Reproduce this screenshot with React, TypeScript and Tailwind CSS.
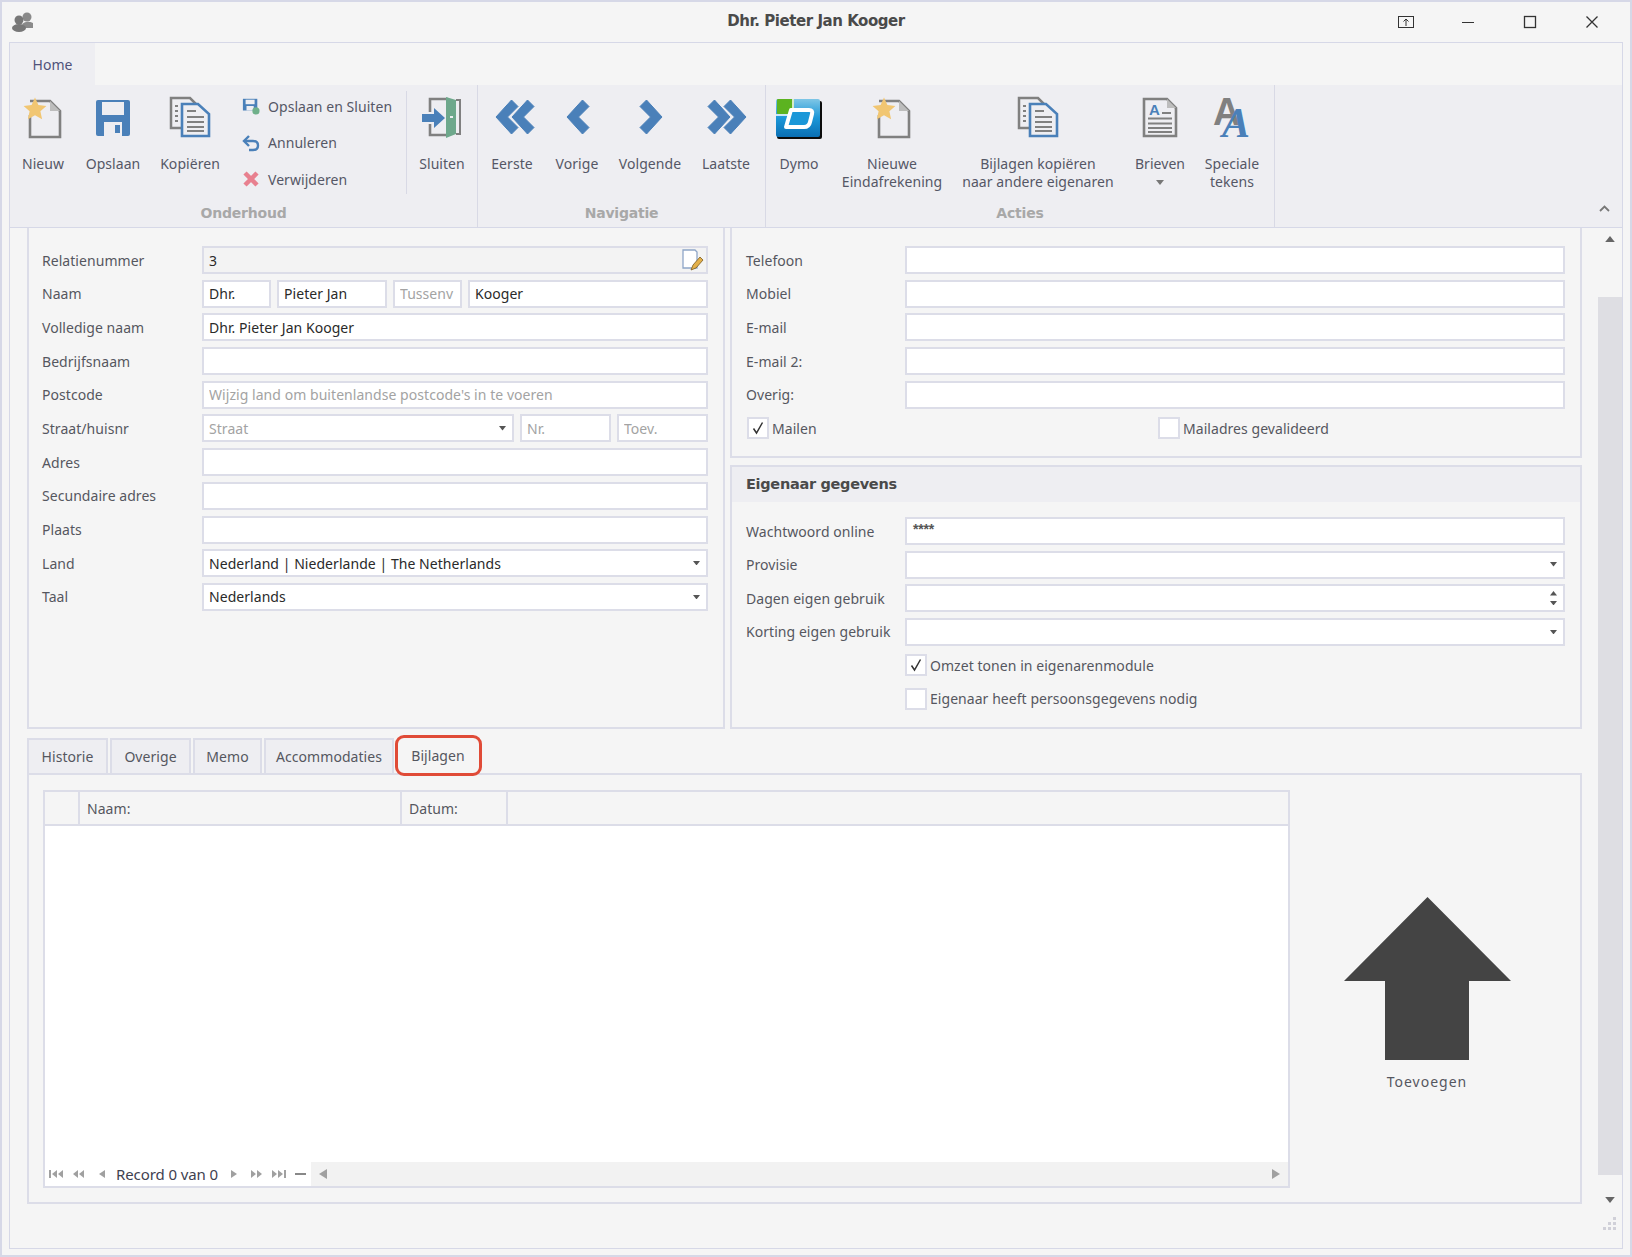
import React from "react";

const BLUE = "#4a80b9";
const GRAY = "#808080";

function NewDocIcon() {
  return (
    <svg width="44" height="44" viewBox="0 0 44 44">
      <path d="M9 6H29L39 16V42H9V20" fill="none" stroke={GRAY} strokeWidth="2.6" />
      <path d="M29 6V16H39Z" fill="#bdbdbd" />
      <path d="M14 1.5l3.4 7.5 8 .9-6 5.4 1.7 8-7.100-4.100-7.100 4.100 1.700-8-6-5.400 8-.9z" fill="#f1c672" transform="translate(0,1)" />
    </svg>
  );
}

function SaveIcon() {
  return (
    <svg width="44" height="44" viewBox="0 0 44 44">
      <path d="M5 7a2 2 0 0 1 2-2h30a2 2 0 0 1 2 2v32a2 2 0 0 1-2 2H7a2 2 0 0 1-2-2Z" fill={BLUE} />
      <rect x="11" y="7" width="22" height="13" fill="#eeeef2" />
      <rect x="13" y="27" width="18" height="14" fill="#eeeef2" />
      <rect x="24" y="30" width="5" height="8" fill={BLUE} />
    </svg>
  );
}

function CopyIcon() {
  return (
    <svg width="44" height="44" viewBox="0 0 44 44">
      <path d="M3 3H22L28 9V33H3Z" fill="none" stroke={GRAY} strokeWidth="2.500" />
      <path d="M7 11h3M7 16h3M7 21h3M7 26h3" stroke={GRAY} strokeWidth="2" />
      <path d="M14 9H30L41 19V41H14Z" fill="#eeeef2" stroke={BLUE} strokeWidth="2.600" />
      <path d="M19 16h9M19 22h17M19 27h17M19 32h17M19 36h17" stroke={GRAY} strokeWidth="2.200" />
    </svg>
  );
}

function ExitIcon() {
  return (
    <svg width="44" height="44" viewBox="0 0 44 44">
      <path d="M28 4H10V17M10 29V40H28" fill="none" stroke={GRAY} strokeWidth="2.600" />
      <path d="M26 2L36 5V39L26 43Z" fill="#6ea88c" />
      <path d="M36 5H40V39H36" fill="none" stroke={GRAY} strokeWidth="2" />
      <rect x="30" y="21" width="3" height="2" fill="#eeeef2" />
      <path d="M2 19H14V13L25 23L14 33V27H2Z" fill={BLUE} />
    </svg>
  );
}

function Chevrons({ dir, count }: { dir: "l" | "r"; count: 1 | 2 }) {
  const w = count === 2 ? 40 : 24;
  const left = "16.500,1 23,7.500 12.500,18 23,28.500 16.500,35 1,18";
  const right = "7.500,1 1,7.500 11.500,18 1,28.500 7.500,35 23,18";
  const pts = dir === "l" ? left : right;
  return (
    <svg width={w} height="44" viewBox={`0 0 ${w} 44`}>
      <g transform="translate(0,4)" fill={BLUE} stroke={BLUE} strokeWidth="1" strokeLinejoin="round">
        <polygon points={pts} />
        {count === 2 && <polygon points={pts} transform="translate(16,0)" />}
      </g>
    </svg>
  );
}

function DymoIcon() {
  return (
    <svg width="46" height="44" viewBox="0 0 46 44">
      <defs>
        <linearGradient id="dy" x1="0" y1="0" x2="0" y2="1">
          <stop offset="0" stopColor="#7fc6e6" />
          <stop offset="0.5" stopColor="#1b97d8" />
          <stop offset="1" stopColor="#0a6fb4" />
        </linearGradient>
      </defs>
      <rect x="1" y="6" width="45" height="38" rx="2" fill="#0c0c0c" />
      <rect x="0" y="4" width="44" height="38" rx="2" fill="url(#dy)" />
      <rect x="1" y="4" width="17" height="15" rx="1" fill="#5cb320" />
      <path d="M0 20H17V4" fill="none" stroke="#fff" strokeWidth="1.500" />
      <path d="M15 15H33Q37 15 36 19L34 27Q33 32 28 32H10Z" fill="#1b97d8" stroke="#fff" strokeWidth="4" strokeLinejoin="round" />
    </svg>
  );
}

function LetterIcon() {
  return (
    <svg width="44" height="44" viewBox="0 0 44 44">
      <path d="M6 4H29L38 13V41H6Z" fill="none" stroke={GRAY} strokeWidth="2.600" />
      <path d="M29 4V13H38Z" fill="#bdbdbd" />
      <text x="11" y="20" fontSize="15" fontWeight="700" fontFamily="'Liberation Sans',sans-serif" fill={BLUE}>A</text>
      <path d="M24 18h9M10 23.500h24M10 28.500h24M10 33h24M10 37h24" stroke={GRAY} strokeWidth="2" />
    </svg>
  );
}

function SpecialIcon() {
  return (
    <svg width="44" height="44" viewBox="0 0 44 44" overflow="visible">
      <text x="3" y="30" fontSize="38" fontWeight="700" fontFamily="'Liberation Sans',sans-serif" fill={GRAY}>A</text>
      <text x="12" y="42" fontSize="42" fontStyle="italic" fontWeight="700" fontFamily="'Liberation Serif',serif" fill={BLUE}>A</text>
    </svg>
  );
}

function Caret({ dir = "d", color = "#555", size = 7 }: { dir?: "d" | "u"; color?: string; size?: number }) {
  return (
    <svg width={size} height={size / 2 + 1} viewBox="0 0 8 5" className="shrink-0">
      <path d={dir === "d" ? "M0 0H8L4 5Z" : "M0 5H8L4 0Z"} fill={color} />
    </svg>
  );
}

function Large({ w, icon, lines, caret }: { w: string; icon: React.ReactNode; lines: string[]; caret?: boolean }) {
  return (
    <div className={`${w} flex flex-col items-center pt-[10px]`}>
      <div className="h-[44px] flex items-start justify-center">{icon}</div>
      <div className="mt-[16px] text-center leading-[18px] whitespace-nowrap">
        {lines.map((l) => (
          <div key={l}>{l}</div>
        ))}
        {caret && (
          <div className="flex justify-center pt-[7px]">
            <Caret color="#777" size={8} />
          </div>
        )}
      </div>
    </div>
  );
}

function Small({ icon, label }: { icon: React.ReactNode; label: string }) {
  return (
    <div className="h-[36.500px] flex items-center gap-[8px]">
      <div className="w-[18px] h-[18px] flex items-center justify-center">{icon}</div>
      <span className="whitespace-nowrap">{label}</span>
    </div>
  );
}

function Group({ w, label, children }: { w: string; label: string; children: React.ReactNode }) {
  return (
    <div className={`${w} shrink-0 h-full flex flex-col border-r border-[#d8d9e5]`}>
      <div className="h-[114px] flex">{children}</div>
      <div className="flex-1 flex items-center justify-center text-[#a8a8a8] text-[14px] font-bold [font-family:'DejaVu_Sans',sans-serif] tracking-[-0.2px]">
        {label}
      </div>
    </div>
  );
}

function Input({ w = "flex-1", value, ph, bg = "bg-white", right }: { w?: string; value?: string; ph?: string; bg?: string; right?: React.ReactNode }) {
  return (
    <div className={`${w} min-w-0 h-[28px] border-2 border-[#dcdde8] ${bg} flex items-center pl-[5px] pr-[6px] overflow-hidden`}>
      <span className={`flex-1 whitespace-nowrap overflow-hidden ${value ? "text-[#2a2a2a]" : "text-[#a3a3a3]"}`}>{value || ph}</span>
      {right}
    </div>
  );
}

function Row({ label, lw, children }: { label?: string; lw: string; children: React.ReactNode }) {
  return (
    <div className="h-[28px] flex items-center">
      <div className={`${lw} shrink-0 whitespace-nowrap text-[#55575f]`}>{label}</div>
      <div className="flex-1 flex gap-[6px] items-center">{children}</div>
    </div>
  );
}

function Check({ checked, label }: { checked?: boolean; label: string }) {
  return (
    <div className="flex items-center gap-[3px] h-[28px]">
      <div className="w-[22px] h-[22px] border-2 border-[#dcdde8] bg-white flex items-center justify-center">
        {checked && (
          <svg width="14" height="14" viewBox="0 0 14 14">
            <path d="M2.500 7.500L5.500 12L11.500 1.500" fill="none" stroke="#333" strokeWidth="1.500" />
          </svg>
        )}
      </div>
      <span className="whitespace-nowrap text-[#55575f]">{label}</span>
    </div>
  );
}

function PagerIcon({ d, w = 14 }: { d: string; w?: number }) {
  return (
    <svg width={w} height="10" viewBox={`0 0 ${w} 10`} className="shrink-0">
      <path d={d} fill="#a0a0a0" />
    </svg>
  );
}

const dd = <Caret />;

export default function App() {
  return (
    <div className="w-[1632px] h-[1257px] box-border border-2 border-[#d6d8e7] bg-[#f5f5f5] flex flex-col overflow-hidden text-[14px] text-[#555766] [font-family:'Noto_Sans',sans-serif] tracking-[0.05px]">
      {/* Title bar */}
      <div className="h-[40px] shrink-0 flex items-center">
        <div className="w-[300px] pl-[10px] flex items-center">
          <svg width="22" height="20" viewBox="0 0 22 20">
            <circle cx="15" cy="5" r="4.500" fill="#8a8a8a" />
            <path d="M10 12q5-4 11-1v5H13z" fill="#8a8a8a" />
            <circle cx="7" cy="8" r="4.500" fill="#777" />
            <ellipse cx="7" cy="16" rx="7" ry="4" fill="#777" />
          </svg>
        </div>
        <div className="flex-1 text-center text-[15px] font-bold text-[#4a4a4a] [font-family:'DejaVu_Sans',sans-serif] tracking-[-0.45px] pb-[1px]">
          Dhr. Pieter Jan Kooger
        </div>
        <div className="w-[300px] flex items-center justify-end h-full pr-[30px] gap-[46px] text-[#333]">
          <svg width="16" height="12" viewBox="0 0 16 12"><rect x="0.500" y="0.500" width="15" height="11" fill="none" stroke="#333" /><path d="M8 10V4M5.500 5.500L8 3l2.500 2.500" fill="none" stroke="#333" /></svg>
          <svg width="16" height="12" viewBox="0 0 16 12"><path d="M2 6.500H14" stroke="#333" strokeWidth="1" /></svg>
          <svg width="16" height="14" viewBox="0 0 16 14"><rect x="2.500" y="1.500" width="11" height="11" fill="none" stroke="#333" strokeWidth="1.300" /></svg>
          <svg width="16" height="14" viewBox="0 0 16 14"><path d="M2.500 1.500L13.500 12.500M13.500 1.500L2.500 12.500" stroke="#333" strokeWidth="1.300" /></svg>
        </div>
      </div>

      {/* Frame */}
      <div className="ml-[7px] w-[1614px] h-[1207px] shrink-0 border border-[#d6d8e7] flex flex-col">
        <div className="h-[42px] shrink-0 flex">
          <div className="w-[85px] bg-[#eeeef2] flex items-center justify-center text-[#50527a] pt-[1px]">Home</div>
        </div>

        {/* Ribbon */}
        <div className="h-[143px] shrink-0 bg-[#eeeef2] border-b border-[#d6d8e7] flex">
          <Group w="w-[468px]" label="Onderhoud">
            <Large w="w-[66px]" icon={<NewDocIcon />} lines={["Nieuw"]} />
            <Large w="w-[74px]" icon={<SaveIcon />} lines={["Opslaan"]} />
            <Large w="w-[80px]" icon={<CopyIcon />} lines={["Kopiëren"]} />
            <div className="w-[176px] pl-[12px] pt-[3px]">
              <Small
                label="Opslaan en Sluiten"
                icon={
                  <svg width="20" height="20" viewBox="0 0 20 20">
                    <path d="M1 2H17V15H1Z" fill={BLUE} />
                    <rect x="4" y="3" width="10" height="5" fill="#eeeef2" />
                    <rect x="5" y="10" width="8" height="5" fill="#eeeef2" />
                    <circle cx="15.500" cy="15.500" r="4" fill="#6fb08a" />
                  </svg>
                }
              />
              <Small
                label="Annuleren"
                icon={
                  <svg width="18" height="18" viewBox="0 0 18 18">
                    <path d="M7 2L2 7L7 12" fill="none" stroke={BLUE} strokeWidth="2.400" />
                    <path d="M3 7H11Q16 7 16 11.500T11 16H7" fill="none" stroke={BLUE} strokeWidth="2.400" />
                  </svg>
                }
              />
              <Small
                label="Verwijderen"
                icon={
                  <svg width="18" height="18" viewBox="0 0 18 18">
                    <path d="M3 3L15 15M15 3L3 15" stroke="#e8808f" strokeWidth="4.500" />
                  </svg>
                }
              />
            </div>
            <div className="w-px h-[103px] mt-[6px] bg-[#d8d9e5]" />
            <Large w="w-[70px]" icon={<ExitIcon />} lines={["Sluiten"]} />
          </Group>
          <Group w="w-[288px]" label="Navigatie">
            <Large w="w-[68px]" icon={<div className="translate-x-[3px]"><Chevrons dir="l" count={2} /></div>} lines={["Eerste"]} />
            <Large w="w-[62px]" icon={<div className="translate-x-[1px]"><Chevrons dir="l" count={1} /></div>} lines={["Vorige"]} />
            <Large w="w-[84px]" icon={<div className="translate-x-[1px]"><Chevrons dir="r" count={1} /></div>} lines={["Volgende"]} />
            <Large w="w-[68px]" icon={<div className="translate-x-[1px]"><Chevrons dir="r" count={2} /></div>} lines={["Laatste"]} />
          </Group>
          <Group w="w-[509px]" label="Acties">
            <Large w="w-[66px]" icon={<DymoIcon />} lines={["Dymo"]} />
            <Large w="w-[120px]" icon={<NewDocIcon />} lines={["Nieuwe", "Eindafrekening"]} />
            <Large w="w-[172px]" icon={<CopyIcon />} lines={["Bijlagen kopiëren", "naar andere eigenaren"]} />
            <Large w="w-[72px]" icon={<LetterIcon />} lines={["Brieven"]} caret />
            <Large w="w-[72px]" icon={<SpecialIcon />} lines={["Speciale", "tekens"]} />
          </Group>
          <div className="flex-1 flex items-end justify-end pr-[12px] pb-[15px]">
            <svg width="11" height="7" viewBox="0 0 11 7"><path d="M1 6L5.500 1.500L10 6" fill="none" stroke="#777" strokeWidth="1.800" /></svg>
          </div>
        </div>

        {/* Main */}
        <div className="flex-1 flex min-h-0">
          <div className="w-[1572px] shrink-0 pl-[17px] flex flex-col">
            <div className="h-[501px] shrink-0 flex gap-[5px]">
              {/* Left panel */}
              <div className="w-[698px] border-x-2 border-b-2 border-[#dcdde8] pl-[13px] pr-[15px] pt-[18px] flex flex-col gap-[5.700px]">
                <Row label="Relatienummer" lw="w-[160px]">
                  <Input value="3" bg="bg-[#f3f3f3]" right={
                    <svg width="24" height="24" viewBox="0 0 24 24" className="shrink-0 -mr-[4px]">
                      <path d="M3 2H15L17 4V20H3Z" fill="#fff" stroke="#8fa6c8" strokeWidth="1.300" />
                      <path d="M11 22L13 17L20 9L23 12L16 20Z" fill="#e3b04a" stroke="#7a5a20" strokeWidth="0.800" />
                    </svg>
                  } />
                </Row>
                <Row label="Naam" lw="w-[160px]">
                  <Input w="w-[69px]" value="Dhr." />
                  <Input w="w-[110px]" value="Pieter Jan" />
                  <Input w="w-[69px]" ph="Tussenv" />
                  <Input value="Kooger" />
                </Row>
                <Row label="Volledige naam" lw="w-[160px]"><Input value="Dhr. Pieter Jan Kooger" /></Row>
                <Row label="Bedrijfsnaam" lw="w-[160px]"><Input /></Row>
                <Row label="Postcode" lw="w-[160px]"><Input ph="Wijzig land om buitenlandse postcode's in te voeren" /></Row>
                <Row label="Straat/huisnr" lw="w-[160px]">
                  <Input w="w-[312px]" ph="Straat" right={dd} />
                  <Input w="w-[91px]" ph="Nr." />
                  <Input ph="Toev." />
                </Row>
                <Row label="Adres" lw="w-[160px]"><Input /></Row>
                <Row label="Secundaire adres" lw="w-[160px]"><Input /></Row>
                <Row label="Plaats" lw="w-[160px]"><Input /></Row>
                <Row label="Land" lw="w-[160px]"><Input value="Nederland | Niederlande | The Netherlands" right={dd} /></Row>
                <Row label="Taal" lw="w-[160px]"><Input value="Nederlands" right={dd} /></Row>
              </div>

              {/* Right column */}
              <div className="flex-1 flex flex-col gap-[7px]">
                <div className="h-[230px] shrink-0 border-x-2 border-b-2 border-[#dcdde8] pl-[14px] pr-[15px] pt-[18px] flex flex-col gap-[5.700px]">
                  <Row label="Telefoon" lw="w-[159px]"><Input /></Row>
                  <Row label="Mobiel" lw="w-[159px]"><Input /></Row>
                  <Row label="E-mail" lw="w-[159px]"><Input /></Row>
                  <Row label="E-mail 2:" lw="w-[159px]"><Input /></Row>
                  <Row label="Overig:" lw="w-[159px]"><Input /></Row>
                  <div className="flex pl-[1px]">
                    <div className="w-[411px]"><Check checked label="Mailen" /></div>
                    <Check label="Mailadres gevalideerd" />
                  </div>
                </div>
                <div className="flex-1 border-2 border-[#dcdde8] flex flex-col">
                  <div className="h-[35px] shrink-0 bg-[#eeeef2] pl-[14px] flex items-center text-[14.500px] font-bold text-[#4a4a4a] [font-family:'DejaVu_Sans',sans-serif] tracking-[-0.3px]">
                    Eigenaar gegevens
                  </div>
                  <div className="pl-[14px] pr-[15px] pt-[15px] flex flex-col gap-[5.600px]">
                    <Row label="Wachtwoord online" lw="w-[159px]">
                      <div className="flex-1 h-[28px] border-2 border-[#dcdde8] bg-white pl-[6px] text-[#555] text-[14px] font-bold leading-[20px] tracking-[-0.2px] [font-family:'Liberation_Sans',sans-serif]">****</div>
                    </Row>
                    <Row label="Provisie" lw="w-[159px]"><Input right={dd} /></Row>
                    <Row label="Dagen eigen gebruik" lw="w-[159px]">
                      <Input right={<div className="flex flex-col gap-[5px]"><Caret dir="u" /><Caret /></div>} />
                    </Row>
                    <Row label="Korting eigen gebruik" lw="w-[159px]"><Input right={dd} /></Row>
                    <Row lw="w-[159px]"><Check checked label="Omzet tonen in eigenarenmodule" /></Row>
                    <Row lw="w-[159px]"><Check label="Eigenaar heeft persoonsgegevens nodig" /></Row>
                  </div>
                </div>
              </div>
            </div>

            {/* Tabs */}
            <div className="mt-[9px] h-[35px] shrink-0 flex gap-[2px]">
              {[
                ["Historie", "w-[81px]"],
                ["Overige", "w-[81px]"],
                ["Memo", "w-[69px]"],
                ["Accommodaties", "w-[130px]"],
              ].map(([t, w]) => (
                <div key={t} className={`${w} bg-[#eeeef2] border-2 border-b-0 border-[#dcdde8] flex items-center justify-center text-[#55575f]`}>{t}</div>
              ))}
              <div className="w-[84px] relative flex items-center justify-center text-[#55575f]">
                Bijlagen
                <div className="absolute -left-[1px] -top-[3px] w-[87px] h-[41px] border-[3px] border-[#e04b37] rounded-[9px]" />
              </div>
            </div>

            {/* Tab panel */}
            <div className="h-[431px] shrink-0 border-2 border-[#dcdde8] flex pl-[14px] pt-[15px]">
              <div className="w-[1247px] h-[398px] shrink-0 border-2 border-[#dcdde8] bg-white flex flex-col">
                <div className="h-[34px] shrink-0 bg-[#f5f5f5] border-b-2 border-[#dcdde8] flex text-[#55575f]">
                  <div className="w-[35px] border-r-2 border-[#dcdde8]" />
                  <div className="w-[322px] border-r-2 border-[#dcdde8] pl-[7px] flex items-center">Naam:</div>
                  <div className="w-[106px] border-r-2 border-[#dcdde8] pl-[7px] flex items-center">Datum:</div>
                </div>
                <div className="flex-1" />
                <div className="h-[24px] shrink-0 flex items-center pl-[4px] text-[#3f4150] text-[15px] tracking-[-0.1px]">
                  <PagerIcon d="M0 1H2V9H0ZM8 1V9L3 5ZM14 1V9L9 5Z" />
                  <div className="w-[10px]" />
                  <PagerIcon w={11} d="M5 1V9L0 5ZM11 1V9L6 5Z" />
                  <div className="w-[15px]" />
                  <PagerIcon w={6} d="M6 1V9L0 5Z" />
                  <div className="w-[11px]" />
                  <span className="whitespace-nowrap w-[104px]">Record 0 van 0</span>
                  <div className="w-[11px]" />
                  <PagerIcon w={6} d="M0 1V9L6 5Z" />
                  <div className="w-[14px]" />
                  <PagerIcon w={11} d="M0 1V9L5 5ZM6 1V9L11 5Z" />
                  <div className="w-[10px]" />
                  <PagerIcon d="M0 1V9L5 5ZM6 1V9L11 5ZM12 1H14V9H12Z" />
                  <div className="w-[9px]" />
                  <div className="w-[11px] h-[2px] bg-[#888] shrink-0" />
                  <div className="flex-1 ml-[5px] h-full bg-[#f2f2f2] flex items-center justify-between px-[8px]">
                    <PagerIcon w={8} d="M8 0V10L0 5Z" />
                    <PagerIcon w={8} d="M0 0V10L8 5Z" />
                  </div>
                </div>
              </div>
              <div className="flex-1 pr-[16px] flex flex-col items-center pt-[107px]">
                <svg width="167" height="163" viewBox="0 0 167 163">
                  <path d="M83.500 0L167 84H125V163H41V84H0Z" fill="#444444" />
                </svg>
                <div className="mt-[13px] leading-[18px] tracking-[1px] text-[#55575f]">Toevoegen</div>
              </div>
            </div>
          </div>

          {/* Scrollbar */}
          <div className="flex-1 flex flex-col items-end">
            <div className="w-[24px] flex flex-col">
              <div className="pt-[8px] flex justify-center"><Caret dir="u" color="#666" size={10} /></div>
              <div className="h-[878px] mt-[55px] bg-[#dedee3]" />
              <div className="mt-[22px] flex justify-center"><Caret color="#666" size={10} /></div>
            </div>
            <div className="mt-[14px] mr-[5px]">
              <svg width="14" height="14" viewBox="0 0 14 14" fill="#d0d0d8">
                <rect x="10" y="0" width="3" height="3" />
                <rect x="5" y="5" width="3" height="3" />
                <rect x="10" y="5" width="3" height="3" />
                <rect x="0" y="10" width="3" height="3" />
                <rect x="5" y="10" width="3" height="3" />
                <rect x="10" y="10" width="3" height="3" />
              </svg>
            </div>
          </div>
        </div>
      </div>
    </div>
  );
}
